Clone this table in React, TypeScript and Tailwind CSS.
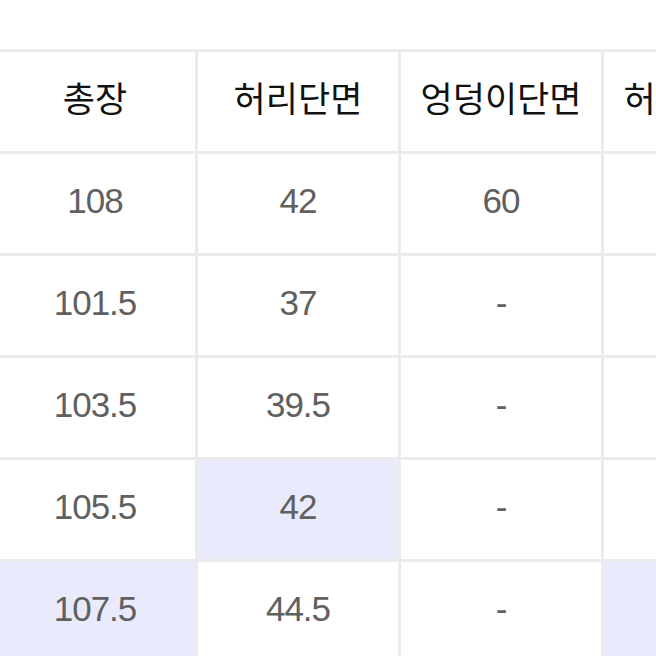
type Cell = { text: string; hl?: boolean };

const header = ["총장", "허리단면", "엉덩이단면", "허벅지단면"];

const rows: Cell[][] = [
  [{ text: "108" }, { text: "42" }, { text: "60" }, { text: "" }],
  [{ text: "101.5" }, { text: "37" }, { text: "-" }, { text: "" }],
  [{ text: "103.5" }, { text: "39.5" }, { text: "-" }, { text: "" }],
  [{ text: "105.5" }, { text: "42", hl: true }, { text: "-" }, { text: "" }],
  [{ text: "107.5", hl: true }, { text: "44.5" }, { text: "-" }, { text: "", hl: true }]
];

export default function App() {
  return (
    <div
      className="h-[656px] w-[656px] overflow-hidden bg-white pt-[49px]"
      style={{ fontFamily: '"Liberation Sans", "Noto Sans CJK KR", sans-serif' }}
    >
      <div className="-ml-[5px] grid w-[812px] grid-cols-[200px_200px_200px_200px] auto-rows-[99px] gap-[3px] bg-[#ebebeb] pt-[3px]">
        {header.map((h) => (
          <div
            key={h}
            className="flex items-center justify-center whitespace-nowrap bg-white pb-[2px] text-[35px] text-[#111111]"
          >
            {h}
          </div>
        ))}
        {rows.map((row, i) =>
          row.map((cell, j) => (
            <div
              key={`${i}-${j}`}
              className={`flex items-center justify-center whitespace-nowrap pb-[5px] text-[35px] tracking-[-1px] text-[#606060] ${
                cell.hl ? "bg-[#e9eafc]" : "bg-white"
              }`}
            >
              {cell.text}
            </div>
          ))
        )}
      </div>
    </div>
  );
}
